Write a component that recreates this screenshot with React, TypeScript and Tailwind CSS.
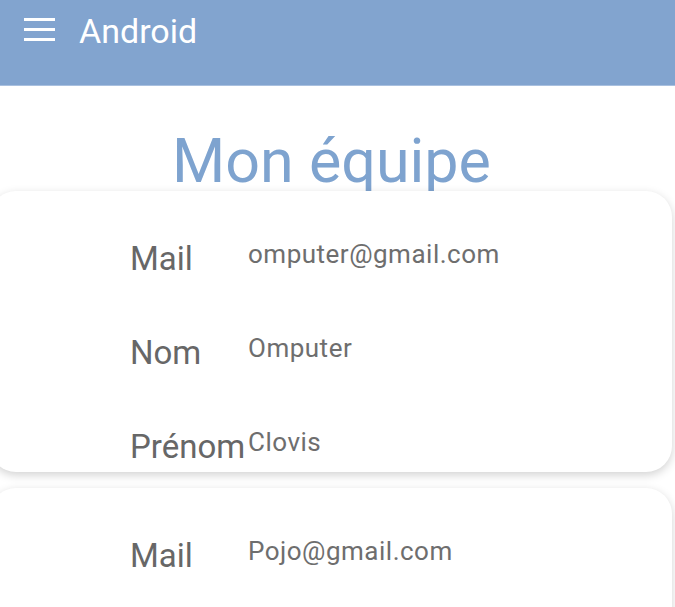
import React from "react";

type Member = { mail: string; nom: string; prenom: string };

const members: Member[] = [
  { mail: "omputer@gmail.com", nom: "Omputer", prenom: "Clovis" },
  { mail: "Pojo@gmail.com", nom: "Pojo", prenom: "Jean" },
];

function Row({ label, value }: { label: string; value: string }) {
  return (
    <div className="flex items-start">
      <div className="w-[118px] shrink-0 text-[33px] leading-[38px] text-[#676767]">{label}</div>
      <div className="-mt-[1px] text-[26px] leading-[30px] tracking-[0.5px] text-[#6e6e6e]">{value}</div>
    </div>
  );
}

function Card({ m }: { m: Member }) {
  return (
    <div className="-ml-[10px] mr-[3px] rounded-[26px] bg-white pl-[140px] pt-[49px] pb-[6px] shadow-[0_3px_10px_rgba(0,0,0,0.18)]">
      <div className="flex flex-col gap-[56px]">
        <Row label="Mail" value={m.mail} />
        <Row label="Nom" value={m.nom} />
        <Row label="Prénom" value={m.prenom} />
      </div>
    </div>
  );
}

export default function App() {
  return (
    <div
      className="h-[607px] w-[675px] overflow-hidden bg-white"
      style={{ fontFamily: "Roboto, 'Noto Sans', sans-serif" }}
    >
      <header className="flex h-[86px] items-start bg-[#82a4cf] pl-[24px] pt-[12px] border-b border-[#a9c0df]">
        <svg width="31" height="24" viewBox="0 0 31 24" className="mt-[6px]">
          <rect x="0" y="0" width="31" height="3" fill="white" />
          <rect x="0" y="10" width="31" height="3" fill="white" />
          <rect x="0" y="20" width="31" height="3" fill="white" />
        </svg>
        <span className="ml-[24px] text-[34px] leading-[38px] text-white">Android</span>
      </header>
      <h1 className="mt-[45px] pr-[12px] text-center text-[61px] leading-[60px] font-normal text-[#7ea3cf]">
        Mon équipe
      </h1>
      <div className="flex flex-col gap-[16px]">
        {members.map((m) => (
          <Card key={m.mail} m={m} />
        ))}
      </div>
    </div>
  );
}
